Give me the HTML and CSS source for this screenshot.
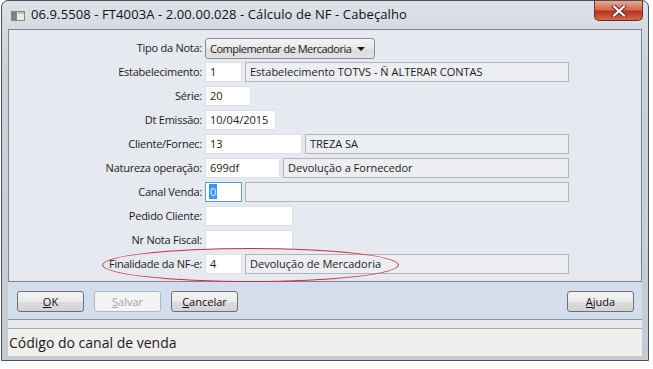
FILE: index.html
```html
<!DOCTYPE html>
<html lang="pt">
<head>
  <meta charset="UTF-8" />
  <title>Cálculo de NF - Cabeçalho</title>
  <link rel="stylesheet" href="styles.css">
</head>
<body>
  <div class="window">
    <div class="titlebar">
      <svg class="app-icon" width="14" height="10" viewBox="0 0 14 10">
        <rect x="0.5" y="0.5" width="13" height="9" fill="#e9ece9" stroke="#7d8a80"/>
        <rect x="1" y="1" width="5" height="8" fill="#6f8f74"/>
        <rect x="7" y="1" width="6" height="2" fill="#b7c4b9"/>
      </svg>
      <span class="title">06.9.5508 - FT4003A - 2.00.00.028 - Cálculo de NF - Cabeçalho</span>
      <div class="close-btn">
        <svg width="16" height="12" viewBox="0 0 16 12">
          <path d="M3 1.5 L13 10.5 M13 1.5 L3 10.5" stroke="#5a2a22" stroke-width="4" stroke-linecap="square"/>
          <path d="M3 1.5 L13 10.5 M13 1.5 L3 10.5" stroke="#ffffff" stroke-width="2.2" stroke-linecap="square"/>
        </svg>
      </div>
    </div>

    <div class="client">
      <div class="form-panel">
        <label class="lbl">Tipo da Nota:</label>
        <div class="field">
          <div class="select">Complementar de Mercadoria<span class="arrow"></span></div>
        </div>

        <label class="lbl">Estabelecimento:</label>
        <div class="field">
          <div class="input w-37">1</div>
          <div class="desc">Estabelecimento TOTVS - Ñ ALTERAR CONTAS</div>
        </div>

        <label class="lbl">Série:</label>
        <div class="field">
          <div class="input w-46">20</div>
        </div>

        <label class="lbl">Dt Emissão:</label>
        <div class="field">
          <div class="input w-71">10/04/2015</div>
        </div>

        <label class="lbl">Cliente/Fornec:</label>
        <div class="field">
          <div class="input w-97">13</div>
          <div class="desc">TREZA SA</div>
        </div>

        <label class="lbl">Natureza operação:</label>
        <div class="field">
          <div class="input w-75">699df</div>
          <div class="desc">Devolução a Fornecedor</div>
        </div>

        <label class="lbl">Canal Venda:</label>
        <div class="field">
          <div class="input w-37 focused"><span class="sel">0</span></div>
          <div class="desc"></div>
        </div>

        <label class="lbl">Pedido Cliente:</label>
        <div class="field">
          <div class="input w-88"></div>
        </div>

        <label class="lbl">Nr Nota Fiscal:</label>
        <div class="field">
          <div class="input w-88"></div>
        </div>

        <label class="lbl">Finalidade da NF-e:</label>
        <div class="field">
          <div class="input w-37">4</div>
          <div class="desc">Devolução de Mercadoria</div>
        </div>

        <div class="mark"></div>
      </div>

      <div class="button-bar">
        <button class="btn"><u>O</u>K</button>
        <button class="btn" disabled><u>S</u>alvar</button>
        <button class="btn"><u>C</u>ancelar</button>
        <button class="btn help"><u>A</u>juda</button>
      </div>

      <div class="band"></div>
      <div class="status">Código do canal de venda</div>
    </div>
  </div>
</body>
</html>
```

FILE: styles.css
```css
body {
  margin: 0;
  padding: 0;
  background-color: #fff;
  font-family: 'Open Sans', 'Noto Sans', sans-serif;
  font-size: 11px;
  color: #1b1b1b;
}

.window {
  width: 646px;
  margin-left: 1px;
  border: 1px solid #4b5058;
  border-radius: 7px 7px 0 0;
  background: linear-gradient(#dde2e8, #ccd3db 60px, #c4cbd3);
  padding-bottom: 4px;
}

.titlebar {
  height: 28px;
  display: flex;
  align-items: flex-start;
}

.app-icon {
  margin: 10px 0 0 9px;
}

.title {
  margin: 4px 0 0 6px;
  font-size: 13px;
  letter-spacing: 0.1px;
  color: #111;
}

.close-btn {
  margin-left: auto;
  margin-right: 5px;
  width: 47px;
  height: 19px;
  border: 1px solid #6a2f27;
  border-top: none;
  border-radius: 0 0 5px 5px;
  background: linear-gradient(#e8a995, #d26a50 45%, #b8351c 55%, #d2684c);
  display: flex;
  justify-content: center;
  align-items: center;
}

.client {
  margin: 0 6px 0 6px;
}

.form-panel {
  position: relative;
  background-color: #e6e9f0;
  border: 1px solid #7e848c;
  padding: 8px 0 7px 0;
  display: grid;
  grid-template-columns: 193px 364px;
  grid-auto-rows: 20px;
  column-gap: 3px;
  row-gap: 4px;
}

.lbl {
  text-align: right;
  line-height: 20px;
  letter-spacing: -0.25px;
  white-space: nowrap;
}

.field {
  display: flex;
  gap: 3px;
}

.input, .desc {
  box-sizing: border-box;
  height: 20px;
  line-height: 18px;
  padding: 0 4px;
  white-space: nowrap;
}

.input {
  background-color: #fff;
  border: 1px solid #dde1e7;
}

.input.focused {
  border-color: #5e9bd6;
  padding-left: 3px;
}

.sel {
  background-color: #3399ff;
  color: #dfefff;
  padding: 0 1px;
}

.desc {
  flex: 1;
  background-color: #eceef1;
  border: 1px solid #b1b5bb;
}

.w-37 { width: 37px; }
.w-46 { width: 46px; }
.w-71 { width: 71px; }
.w-75 { width: 75px; }
.w-88 { width: 88px; }
.w-97 { width: 97px; }

.select {
  box-sizing: border-box;
  width: 170px;
  height: 21px;
  line-height: 19px;
  padding: 0 4px;
  letter-spacing: -0.5px;
  white-space: nowrap;
  border: 1px solid #8b8e92;
  border-radius: 3px;
  background: linear-gradient(#f4f4f4, #e7e7e7 50%, #dcdcdc 51%, #e2e2e2);
  position: relative;
}

.arrow {
  position: absolute;
  right: 9px;
  top: 8px;
  border-left: 4px solid transparent;
  border-right: 4px solid transparent;
  border-top: 4px solid #1a1a1a;
}

.mark {
  position: absolute;
  left: 93px;
  top: 218px;
  width: 295px;
  height: 32px;
  border: 1px solid #c9343f;
  border-radius: 50%;
}

.button-bar {
  display: flex;
  gap: 10px;
  background-color: #d4ddec;
  border-bottom: 1px solid #8c939c;
  padding: 9px 8px 7px 9px;
}

.btn {
  width: 67px;
  height: 21px;
  font-family: 'Open Sans', 'Noto Sans', sans-serif;
  font-size: 11px;
  color: #111;
  border: 1px solid #707070;
  border-radius: 3px;
  background: linear-gradient(#f3f3f3, #ebebeb 50%, #dddddd 51%, #d3d3d3);
  padding: 0;
}

.btn:disabled {
  color: #a3a3a3;
  border-color: #b4b8bc;
  background: #f4f4f4;
}

.btn.help {
  margin-left: auto;
}

.band {
  height: 8px;
  background-color: #e9eaec;
}

.status {
  height: 27px;
  border-top: 1px solid #a7a9ad;
  background-color: #f0efed;
  font-size: 14px;
  line-height: 27px;
  padding-left: 1px;
}
```
